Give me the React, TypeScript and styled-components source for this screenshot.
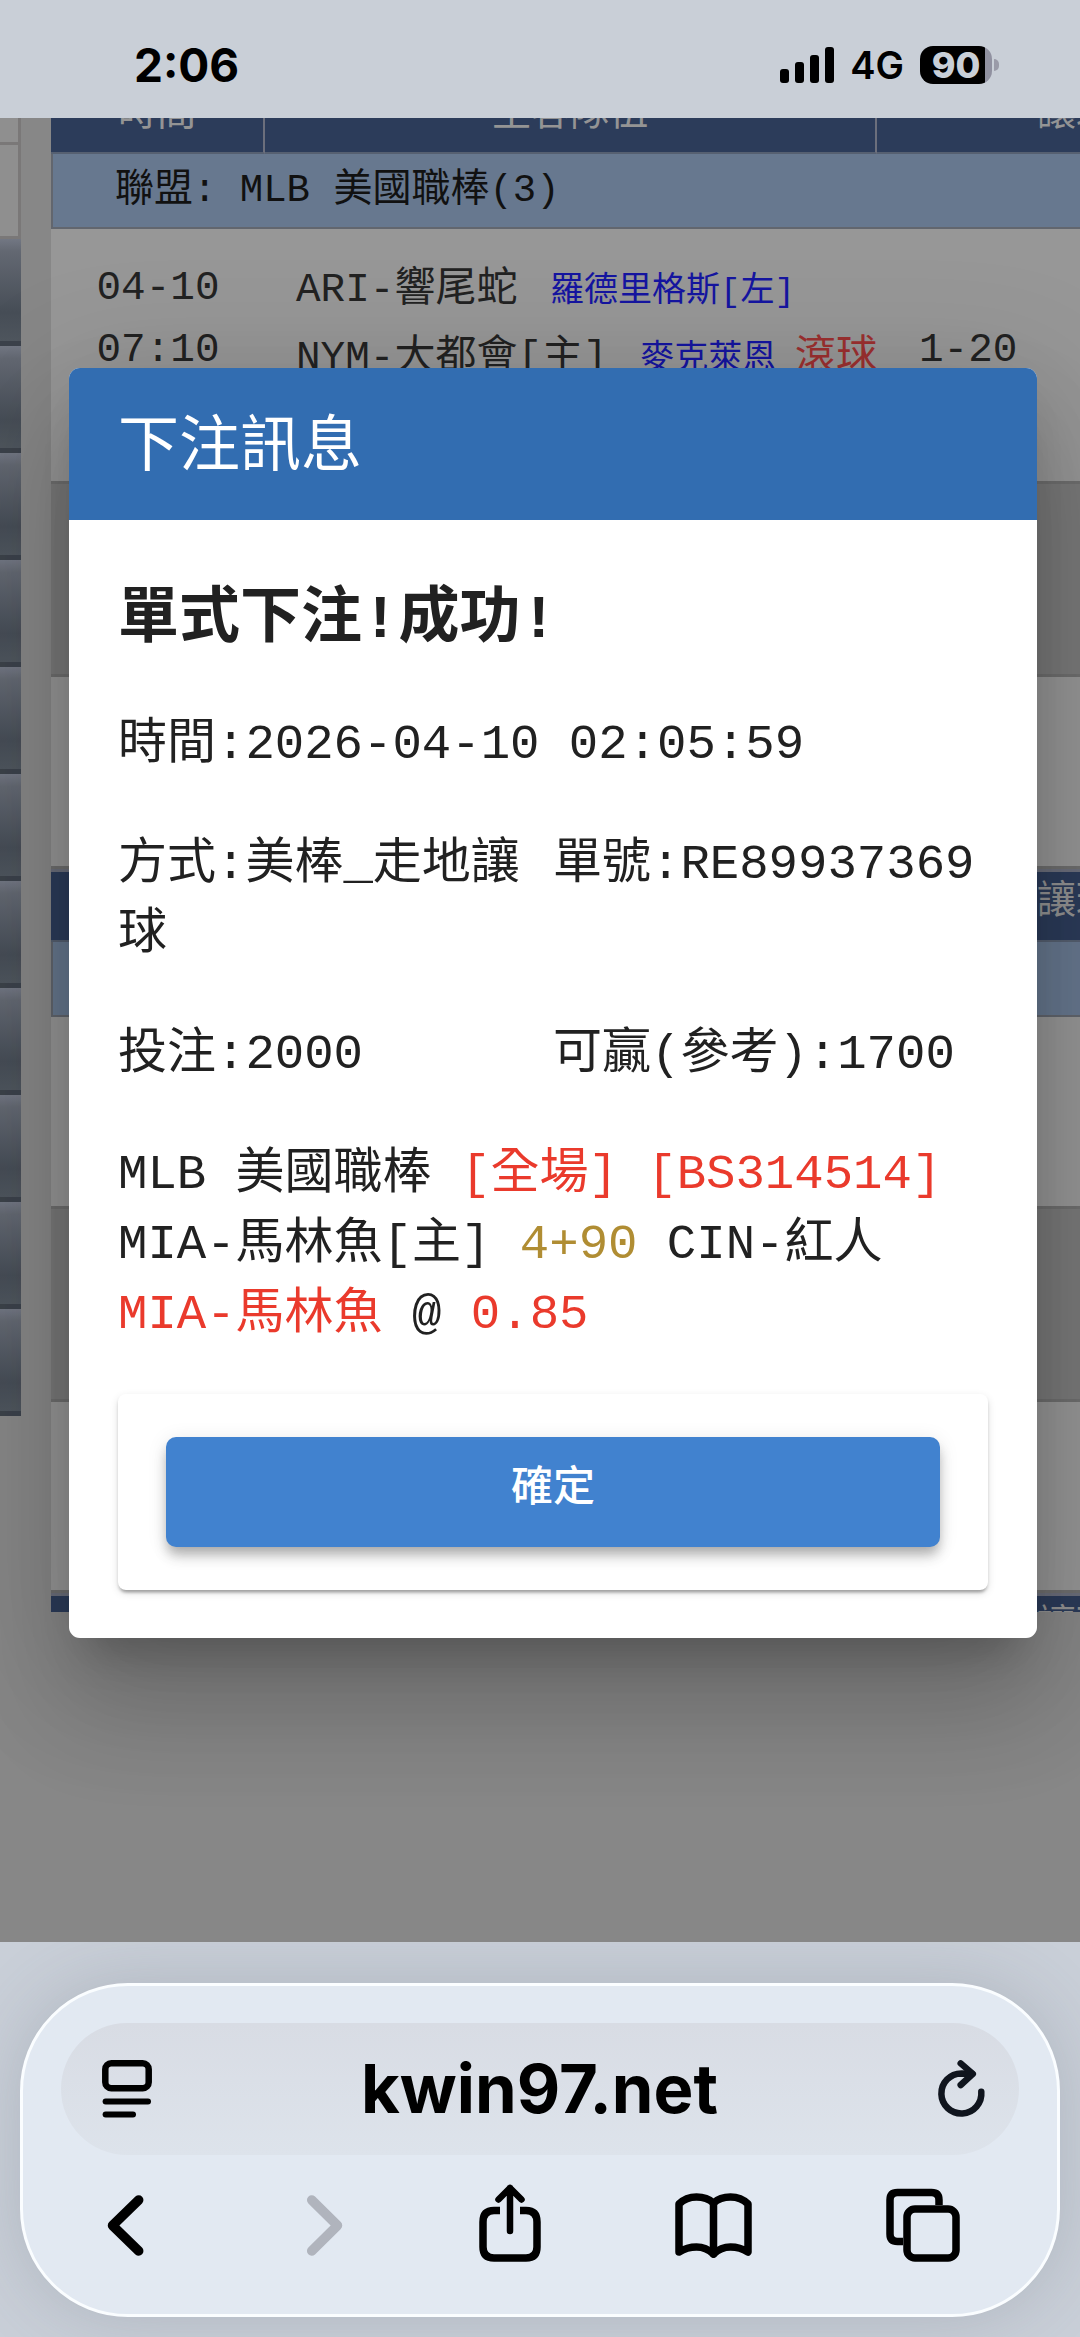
import React from "react";
import styled, { createGlobalStyle } from "styled-components";

const mono = `"Liberation Mono", "Noto Sans CJK TC", monospace`;
const system = `Inter, "Liberation Sans", "Noto Sans CJK TC", sans-serif`;

const GlobalStyle = createGlobalStyle`
  *, *::before, *::after { box-sizing: border-box; }
  body { margin: 0; background: #c9cfd8; }
  button { font: inherit; color: inherit; border: 0; padding: 0; background: none; cursor: pointer; }
  h1, h2, p { margin: 0; font-weight: 400; }
`;

const Screen = styled.div`
  display: flex;
  flex-direction: column;
  min-height: 100vh;
  font-family: ${mono};
`;

/* ---------- status bar ---------- */

const StatusBar = styled.header`
  display: flex;
  justify-content: space-between;
  align-items: center;
  height: 118px;
  padding: 12px 81px 0 134px;
  background: #c9cfd7;
  color: #000;
  font-family: ${system};
`;

const Clock = styled.time`
  font-size: 46px;
  line-height: 48px;
  font-weight: 700;
`;

const StatusIcons = styled.div`
  display: flex;
  align-items: center;
  gap: 16px;
`;

const Network = styled.span`
  font-size: 38px;
  line-height: 48px;
  font-weight: 600;
`;

const Battery = styled.div`
  display: flex;
  align-items: center;
  gap: 2px;
`;

const BatteryBody = styled.span<{ $level: number }>`
  width: 72px;
  height: 38px;
  border-radius: 13px;
  background: linear-gradient(90deg, #000 ${(p) => p.$level}%, #9091a0 ${(p) => p.$level}%);
  color: #c9cfd7;
  font-size: 36px;
  line-height: 38px;
  font-weight: 800;
  text-align: center;
`;

const BatteryTip = styled.span`
  width: 5px;
  height: 12px;
  border-radius: 0 6px 6px 0;
  background: #9a9ba8;
`;

/* ---------- page behind the dialog ---------- */

const Viewport = styled.main`
  position: relative;
  flex: 1;
  overflow: hidden;
  background: #878787;
`;

const Scrolled = styled.div`
  display: flex;
  align-items: flex-start;
  gap: 30px;
  margin-top: -35px;
`;

const Sidebar = styled.div`
  flex: 0 0 21px;
  overflow: hidden;
`;

const SideCell = styled.div<{ $height: number }>`
  height: ${(p) => p.$height}px;
  border: solid #7a7878;
  border-width: 0 3px 3px 0;
  background: #8f8f8f;
`;

const SideItem = styled.div`
  height: 107px;
  border-bottom: 5px solid #3c424b;
  background: linear-gradient(#727783, #636872 12%, #474e57 72%, #4f565e);
`;

const TableClip = styled.div`
  flex: 1;
  min-width: 0;
  height: 1529px;
  overflow: hidden;
`;

const OddsTable = styled.table`
  width: 1226px;
  table-layout: fixed;
  border-spacing: 0;
  color: #222;
`;

const HeadCell = styled.th`
  height: 71px;
  padding: 0 0 6px;
  border-right: 2px solid #6c6f7c;
  border-bottom: 2px solid #566071;
  background: #2c3c5a;
  color: #949494;
  font-size: 39px;
  line-height: 48px;
  font-weight: 400;
`;

const SubHeadCell = styled(HeadCell)`
  height: 73px;
  border-top: 3px solid #6c6f7c;
`;

const LeagueCell = styled.td`
  height: 75px;
  padding: 0 62px;
  border: solid #62666e;
  border-width: 0 0 2px 2px;
  background: #67788f;
  color: #111;
  font-size: 39px;
  line-height: 48px;
`;

const MatchCell = styled.td<{ $height: number; $muted?: boolean; $pad?: number; $center?: boolean }>`
  height: ${(p) => p.$height}px;
  padding: 28px 0 0 ${(p) => p.$pad ?? 0}px;
  border-bottom: 3px solid #6f6f6f;
  background: ${(p) => (p.$muted ? "#7a7a7a" : "#979797")};
  vertical-align: top;
  text-align: ${(p) => (p.$center ? "center" : "left")};
  font-size: 41px;
  line-height: 62px;
  white-space: nowrap;
`;

const Line = styled.div`
  min-height: 62px;
`;

const TeamLine = styled.div`
  display: flex;
  align-items: baseline;
  line-height: 66px;
  white-space: pre;
`;

const Pitcher = styled.span`
  margin-left: 8px;
  color: #1515a0;
  font-size: 34px;
`;

const Live = styled.span`
  margin-left: auto;
  color: #9c3030;
`;

/* ---------- dialog ---------- */

const Overlay = styled.div`
  position: absolute;
  inset: 0;
  padding: 250px 43px 0 69px;
`;

const Dialog = styled.section`
  overflow: hidden;
  border-radius: 11px;
  background: #fff;
  color: #212121;
  font-size: 49px;
  line-height: 70px;
`;

const DialogShadow = styled.div`
  border-radius: 11px;
  box-shadow:
    0 30px 41px -19px rgba(0, 0, 0, 0.2),
    0 66px 104px 8px rgba(0, 0, 0, 0.14),
    0 25px 126px 22px rgba(0, 0, 0, 0.12);
`;

const DialogTitle = styled.h1`
  padding: 36px 49px 24px;
  background: #326db1;
  color: #fff;
  font-size: 61px;
  line-height: 92px;
`;

const DialogBody = styled.div`
  display: flex;
  flex-direction: column;
  gap: 44px;
  padding: 56px 49px 48px;
`;

const Result = styled.h2`
  font-size: 61px;
  line-height: 90px;
  font-weight: 700;
`;

const Fields = styled.div`
  display: grid;
  grid-template-columns: 1fr 1fr;
  row-gap: 50px;
`;

const Field = styled.p<{ $wide?: boolean }>`
  grid-column: ${(p) => (p.$wide ? "1 / -1" : "auto")};
  overflow-wrap: anywhere;
`;

const Red = styled.span`
  color: #ea3a2c;
`;

const Gold = styled.span`
  color: #b08d33;
`;

const Card = styled.div`
  padding: 43px 48px;
  border-radius: 8px;
  box-shadow:
    0 5px 3px -3px rgba(0, 0, 0, 0.2),
    0 3px 3px rgba(0, 0, 0, 0.14),
    0 3px 8px rgba(0, 0, 0, 0.12);
`;

const Confirm = styled.button`
  display: block;
  width: 100%;
  height: 110px;
  padding-bottom: 4px;
  border-radius: 10px;
  background: #4182cf;
  color: #fff;
  font-family: ${mono};
  font-size: 42px;
  line-height: 60px;
  font-weight: 500;
  box-shadow:
    0 8px 11px -3px rgba(0, 0, 0, 0.2),
    0 11px 14px rgba(0, 0, 0, 0.12),
    0 3px 20px rgba(0, 0, 0, 0.1);
`;

/* ---------- browser bar ---------- */

const BrowserBar = styled.footer`
  padding: 41px 20px 20px;
  background: #c9cfd8;
  color: #000;
  overflow: hidden;
`;

const Panel = styled.div`
  padding: 37px 0 52px;
  border: 3px solid #fafdff;
  border-radius: 108px;
  background: #e2e9f2;
  box-shadow: 0 0 70px rgba(80, 90, 105, 0.22);
`;

const AddressBar = styled.div`
  display: grid;
  grid-template-columns: 56px 1fr 56px;
  align-items: center;
  height: 132px;
  margin: 0 38px 31px;
  padding: 0 29px 0 38px;
  border-radius: 66px;
  background: linear-gradient(#d8dce4, #dde3eb);
`;

const IconButton = styled.button`
  display: flex;
  justify-content: center;
`;

const Address = styled.button`
  padding-right: 10px;
  font-family: ${system};
  font-size: 67px;
  line-height: 80px;
  font-weight: 700;
`;

const Toolbar = styled.nav`
  display: flex;
  justify-content: space-between;
  padding: 0 97px 0 68px;
`;

const Stroke = styled.svg<{ $tone?: string }>`
  display: block;
  overflow: visible;
  fill: none;
  stroke: ${(p) => p.$tone ?? "#000"};
  stroke-linecap: round;
  stroke-linejoin: round;
`;

function SignalIcon() {
  return (
    <svg width="54" height="36" viewBox="0 0 54 36" aria-label="signal">
      <rect x="0" y="22" width="9" height="14" rx="3" />
      <rect x="15" y="15" width="9" height="21" rx="3" />
      <rect x="30" y="8" width="9" height="28" rx="3" />
      <rect x="45" y="0" width="9" height="36" rx="3" />
    </svg>
  );
}

function ReaderIcon() {
  return (
    <Stroke width="50" height="58" viewBox="0 0 50 58" strokeWidth="6.5">
      <rect x="3.3" y="3.3" width="43.4" height="25" rx="6" />
      <path d="M3.6 41.5H46" strokeWidth="6" />
      <path d="M3.6 54.5H31" strokeWidth="6" />
    </Stroke>
  );
}

function ReloadIcon() {
  return (
    <Stroke width="48" height="58" viewBox="0 0 48 58" strokeWidth="6.5" $tone="#10151e">
      <path d="M43.3 31.8A20 20 0 1 1 23.3 13.5L34 13.8" />
      <path d="M22.7 3.4L34.8 13.9L22.7 25" />
    </Stroke>
  );
}

function BackIcon() {
  return (
    <Stroke width="60" height="76" viewBox="0 0 60 76" strokeWidth="9.5">
      <path d="M47.7 14L21.5 39.5L47.7 65" />
    </Stroke>
  );
}

function ForwardIcon() {
  return (
    <Stroke width="60" height="76" viewBox="0 0 60 76" strokeWidth="9.5" $tone="#b0b4bd">
      <path d="M26.7 14L52.5 39.5L26.7 65" />
    </Stroke>
  );
}

function ShareIcon() {
  return (
    <Stroke width="62" height="76" viewBox="0 0 62 76" strokeWidth="7.5">
      <path
        d="M21 24.500H15Q4 24.500 4 36V61Q4 72 15 72H47Q58 72 58 61V36Q58 24.500 47 24.500H41"
        strokeLinecap="butt"
      />
      <path d="M31 45V2M19.5 13.5L31 2L42.5 13.5" strokeWidth="6.5" />
    </Stroke>
  );
}

function BookIcon() {
  return (
    <Stroke width="77" height="76" viewBox="0 0 77 76" strokeWidth="7.5">
      <path d="M38.5 17V68" />
      <path d="M38.5 17Q32 11 21.5 11Q11 11 4 18V66Q12 61 21.5 61Q31 61 38.5 68Q46 61 55.5 61Q65 61 73 66V18Q66 11 55.5 11Q45 11 38.5 17Z" />
    </Stroke>
  );
}

function TabsIcon() {
  return (
    <Stroke width="74" height="76" viewBox="0 0 74 76" strokeWidth="7.5">
      <path
        d="M53 19V14Q53 6.5 45.5 6.5H11.5Q4 6.5 4 14V48Q4 55.5 11.5 55.5H17"
        strokeLinecap="butt"
      />
      <rect x="21" y="23" width="49" height="49" rx="8" />
    </Stroke>
  );
}

const columns = ["時間", "主客隊伍", "讓球"];
const sideItems = Array.from({ length: 11 }, (_, i) => i);

function EmptyRow({ height, muted }: { height: number; muted?: boolean }) {
  return (
    <tr>
      <MatchCell colSpan={3} $height={height} $muted={muted} />
    </tr>
  );
}

function SubHeadRow() {
  return (
    <tr>
      <SubHeadCell />
      <SubHeadCell />
      <SubHeadCell>讓球</SubHeadCell>
    </tr>
  );
}

export default function App() {
  return (
    <Screen>
      <GlobalStyle />
      <StatusBar>
        <Clock>2:06</Clock>
        <StatusIcons>
          <SignalIcon />
          <Network>4G</Network>
          <Battery>
            <BatteryBody $level={90}>90</BatteryBody>
            <BatteryTip />
          </Battery>
        </StatusIcons>
      </StatusBar>

      <Viewport>
        <Scrolled>
          <Sidebar>
            <SideCell $height={62} />
            <SideCell $height={94} />
            {sideItems.map((i) => (
              <SideItem key={i} />
            ))}
          </Sidebar>
          <TableClip>
            <OddsTable>
              <colgroup>
                <col width="214" />
                <col width="612" />
                <col width="400" />
              </colgroup>
              <tbody>
                <tr>
                  {columns.map((c) => (
                    <HeadCell key={c}>{c}</HeadCell>
                  ))}
                </tr>
                <tr>
                  <LeagueCell colSpan={3}>聯盟: MLB 美國職棒(3)</LeagueCell>
                </tr>
                <tr>
                  <MatchCell $height={255} $center>
                    <Line>04-10</Line>
                    <Line>07:10</Line>
                  </MatchCell>
                  <MatchCell $height={255} $pad={31}>
                    <TeamLine>
                      {"ARI-響尾蛇 "}
                      <Pitcher>羅德里格斯[左]</Pitcher>
                    </TeamLine>
                    <TeamLine>
                      {"NYM-大都會[主] "}
                      <Pitcher>麥克萊恩</Pitcher>
                      <Live>滾球</Live>
                    </TeamLine>
                  </MatchCell>
                  <MatchCell $height={255} $pad={42}>
                    <Line />
                    <Line>1-20</Line>
                  </MatchCell>
                </tr>
                <EmptyRow height={193} muted />
                <EmptyRow height={192} />
                <SubHeadRow />
                <tr>
                  <LeagueCell colSpan={3} />
                </tr>
                <EmptyRow height={192} />
                <EmptyRow height={193} muted />
                <EmptyRow height={191} />
                <SubHeadRow />
              </tbody>
            </OddsTable>
          </TableClip>
        </Scrolled>

        <Overlay>
          <DialogShadow>
            <Dialog role="dialog" aria-labelledby="dialog-title">
              <DialogTitle id="dialog-title">下注訊息</DialogTitle>
              <DialogBody>
                <Result>單式下注!成功!</Result>
                <Fields>
                  <Field $wide>時間:2026-04-10 02:05:59</Field>
                  <Field>方式:美棒_走地讓球</Field>
                  <Field>單號:RE89937369</Field>
                  <Field>投注:2000</Field>
                  <Field>可贏(參考):1700</Field>
                  <Field $wide>
                    MLB 美國職棒 <Red>[全場] [BS314514]</Red>
                    <br />
                    MIA-馬林魚[主] <Gold>4+90</Gold> CIN-紅人
                    <br />
                    <Red>MIA-馬林魚</Red> @ <Red>0.85</Red>
                  </Field>
                </Fields>
                <Card>
                  <Confirm type="button">確定</Confirm>
                </Card>
              </DialogBody>
            </Dialog>
          </DialogShadow>
        </Overlay>
      </Viewport>

      <BrowserBar>
        <Panel>
          <AddressBar>
            <IconButton type="button" aria-label="Page menu">
              <ReaderIcon />
            </IconButton>
            <Address type="button">kwin97.net</Address>
            <IconButton type="button" aria-label="Reload">
              <ReloadIcon />
            </IconButton>
          </AddressBar>
          <Toolbar>
            <IconButton type="button" aria-label="Back">
              <BackIcon />
            </IconButton>
            <IconButton type="button" aria-label="Forward">
              <ForwardIcon />
            </IconButton>
            <IconButton type="button" aria-label="Share">
              <ShareIcon />
            </IconButton>
            <IconButton type="button" aria-label="Bookmarks">
              <BookIcon />
            </IconButton>
            <IconButton type="button" aria-label="Tabs">
              <TabsIcon />
            </IconButton>
          </Toolbar>
        </Panel>
      </BrowserBar>
    </Screen>
  );
}
